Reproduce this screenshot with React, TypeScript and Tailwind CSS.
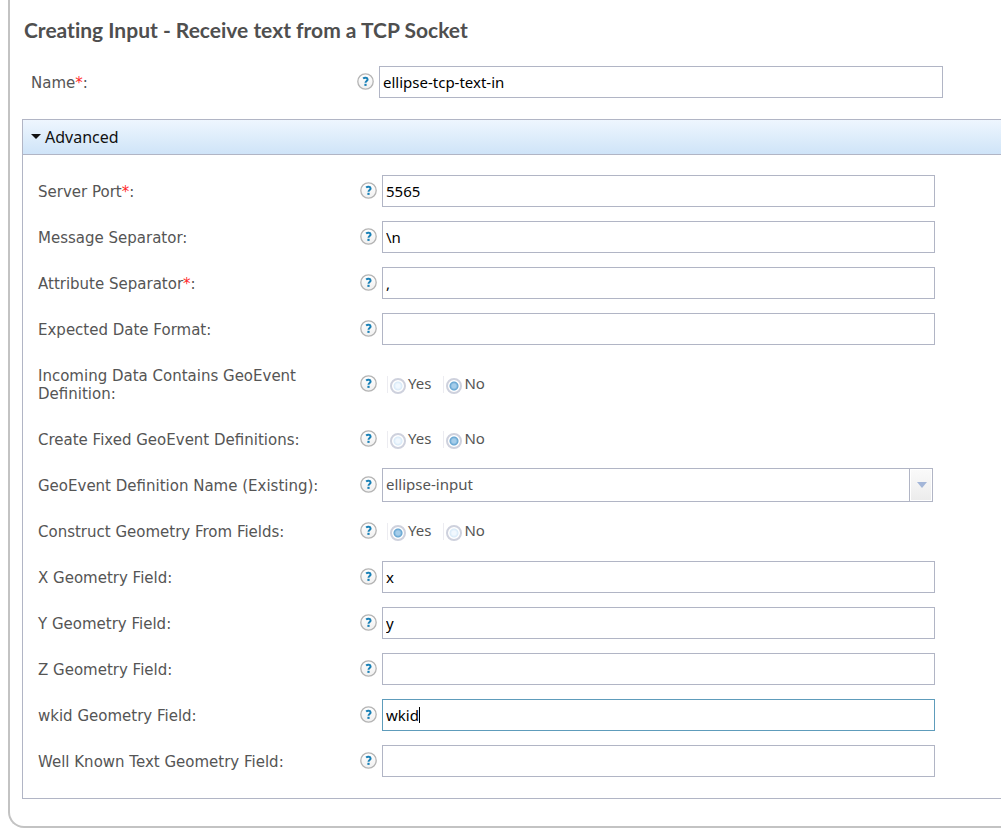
import { useId, useState, type ReactNode } from 'react';

const INPUT =
  "h-8 w-full border border-[#b1b5c5] bg-white px-[3px] font-['Noto_Sans',sans-serif] text-[15px] text-black outline-none focus:border-[#5e9cbb]";

function HelpIcon({ topic }: { topic: string }) {
  return (
    <button type="button" aria-label={`Help: ${topic}`} className="h-[18px] w-[17px] shrink-0">
      <svg viewBox="0 0 17 17" className="mb-px block size-[17px]" aria-hidden="true">
        <defs>
          <linearGradient id="help-fill" x1="0" y1="0" x2="0" y2="1">
            <stop offset="0" stopColor="#ffffff" />
            <stop offset="1" stopColor="#f0f0f0" />
          </linearGradient>
        </defs>
        <circle cx="8.5" cy="8.5" r="7.7" fill="url(#help-fill)" stroke="#b4b4b4" strokeWidth="1.3" />
        <path
          d="M6.1 5.5 C7.4 4.5 10.6 4.4 10.6 6.5 C10.6 8.1 8.6 8 8.5 9.8"
          fill="none"
          stroke="#1a80b6"
          strokeWidth="2"
        />
        <rect x="7.4" y="10.8" width="2.2" height="2.1" fill="#1a80b6" />
      </svg>
    </button>
  );
}

function LabelText({ text, required }: { text: string; required?: boolean }) {
  return (
    <>
      {text}
      {required && <span className="text-[#ff2a2a]">*</span>}:
    </>
  );
}

type RowProps = { text: string; required?: boolean; htmlFor?: string; labelId?: string; children: ReactNode };

function Row({ text, required, htmlFor, labelId, children }: RowProps) {
  const style = 'w-[322px] shrink-0 pt-[15px] pr-8 pb-[13px]';
  return (
    <div className="flex items-center">
      {htmlFor ? (
        <label htmlFor={htmlFor} className={style}>
          <LabelText text={text} required={required} />
        </label>
      ) : (
        <span id={labelId} className={style}>
          <LabelText text={text} required={required} />
        </span>
      )}
      <HelpIcon topic={text} />
      <div className="ml-[5px] min-w-0 flex-1">{children}</div>
    </div>
  );
}

type TextProps = { text: string; value?: string; required?: boolean; active?: boolean };

function TextRow({ text, value = '', required, active }: TextProps) {
  const id = useId();
  const [current, setCurrent] = useState(value);
  const [caret, setCaret] = useState(active);
  return (
    <Row text={text} required={required} htmlFor={id}>
      <div className="relative">
        <input
          id={id}
          type="text"
          value={current}
          onFocus={() => setCaret(false)}
          onChange={(e) => setCurrent(e.target.value)}
          className={active ? `block ${INPUT} border-[#5e9cbb]!` : `block ${INPUT}`}
        />
        {caret && <span className="absolute top-2 left-[37px] h-4 w-px bg-black" />}
      </div>
    </Row>
  );
}

function RadioRow({ text, value }: { text: string; value: 'Yes' | 'No' }) {
  const id = useId();
  return (
    <Row text={text} labelId={id}>
      <div role="radiogroup" aria-labelledby={id} className="flex gap-3 pl-[5px] font-['Noto_Sans',sans-serif]">
        {['Yes', 'No'].map((option) => (
          <label key={option} className="flex items-center gap-0.5">
            <span className="flex h-[17px] items-center border-l border-[#ececf1] pt-[3px] pl-0.5">
              <input
                type="radio"
                name={id}
                defaultChecked={option === value}
                className="size-4 appearance-none rounded-full border-2 border-[#ced1dd] bg-[radial-gradient(circle,#f1f8fe_0_2px,#d8eaf8_4px,#fff_5px)] checked:bg-[radial-gradient(circle,#a5cdea_0_2px,#62a3d0_4px,#fff_5px)]"
              />
            </span>
            <span className="pb-0.5">{option}</span>
          </label>
        ))}
      </div>
    </Row>
  );
}

function SelectRow({ text, value }: { text: string; value: string }) {
  const id = useId();
  return (
    <Row text={text} htmlFor={id}>
      <div className="relative mr-0.5">
        <select
          id={id}
          className="block h-[34px] w-full appearance-none border border-[#b1b5c5] bg-white pr-7 pb-0.5 pl-[3px] font-['Noto_Sans',sans-serif] text-[15px] text-[#555] outline-none"
        >
          <option>{value}</option>
        </select>
        <span className="pointer-events-none absolute inset-y-0 right-0 w-6 border border-[#b1b5c5] p-px">
          <span className="flex h-full items-center justify-center bg-linear-to-b from-[#fafafa] to-[#ececec] pl-0.5">
            <svg viewBox="0 0 10 6" className="h-1.5 w-2.5" aria-hidden="true">
              <path d="M0 0H10L5 6Z" fill="#a3b6d8" />
            </svg>
          </span>
        </span>
      </div>
    </Row>
  );
}

export default function App() {
  const [name, setName] = useState('ellipse-tcp-text-in');
  const [open, setOpen] = useState(true);
  return (
    <main className="overflow-hidden bg-white pb-1 pl-2 font-['DejaVu_Sans',sans-serif] text-[15px] leading-[18px] text-[#555]">
      <form className="rounded-bl-[16px] border-b-2 border-l-2 border-[#c3c3c3] pb-[27px] pl-3">
        <h1 className="pt-[18px] pl-0.5 font-[Lato,sans-serif] text-[21px] leading-6 font-bold text-[#4f4f4f] [font-variant-ligatures:none]">
          Creating Input - Receive text from a TCP Socket
        </h1>
        <div className="mt-6 mr-[58px] ml-[9px] flex items-center">
          <label htmlFor="input-name" className="w-[326px] shrink-0 pt-0.5">
            <LabelText text="Name" required />
          </label>
          <HelpIcon topic="Name" />
          <div className="ml-[5px] min-w-0 flex-1">
            <input
              id="input-name"
              type="text"
              value={name}
              onChange={(e) => setName(e.target.value)}
              className={`block ${INPUT}`}
            />
          </div>
        </div>
        <section className="mt-[21px] border border-r-0 border-[#b1b5c5]">
          <button
            type="button"
            aria-expanded={open}
            onClick={() => setOpen(!open)}
            className="flex h-[35px] w-full items-center gap-1 border-b border-[#b1b5c5] bg-linear-to-b from-[#eef6fe] to-[#cfe4f8] pl-2 font-['Noto_Sans',sans-serif] text-base text-[#111]"
          >
            <svg viewBox="0 0 10 5" className="mb-0.5 h-[5px] w-2.5" aria-hidden="true">
              <path d="M0 0H10L5 5Z" fill="#111" />
            </svg>
            Advanced
          </button>
          {open && (
            <div className="pt-[13px] pr-[66px] pb-3.5 pl-[15px]">
              <TextRow text="Server Port" required value="5565" />
              <TextRow text="Message Separator" value="\n" />
              <TextRow text="Attribute Separator" required value="," />
              <TextRow text="Expected Date Format" />
              <RadioRow text="Incoming Data Contains GeoEvent Definition" value="No" />
              <RadioRow text="Create Fixed GeoEvent Definitions" value="No" />
              <SelectRow text="GeoEvent Definition Name (Existing)" value="ellipse-input" />
              <RadioRow text="Construct Geometry From Fields" value="Yes" />
              <TextRow text="X Geometry Field" value="x" />
              <TextRow text="Y Geometry Field" value="y" />
              <TextRow text="Z Geometry Field" />
              <TextRow text="wkid Geometry Field" value="wkid" active />
              <TextRow text="Well Known Text Geometry Field" />
            </div>
          )}
        </section>
      </form>
    </main>
  );
}
